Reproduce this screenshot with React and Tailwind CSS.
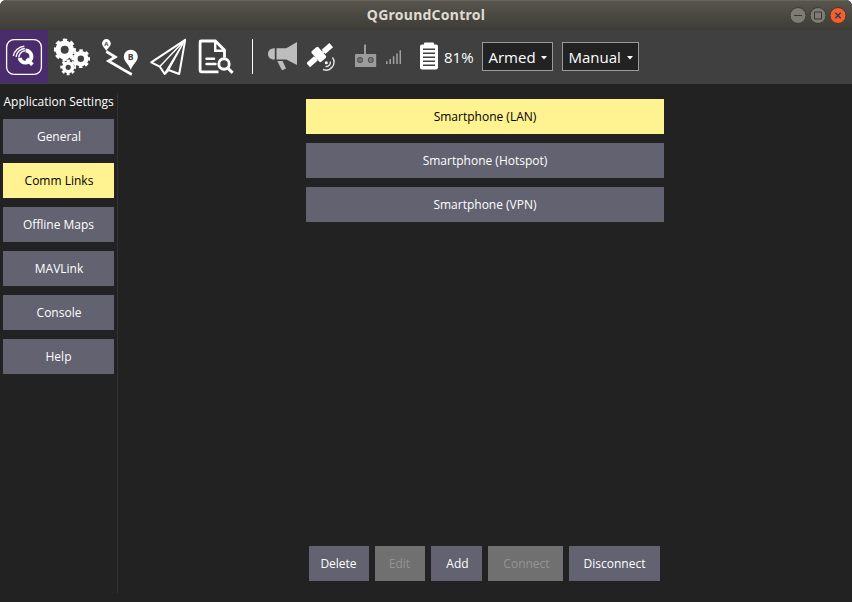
import React from 'react';

function Gear({ x, y, r, w, teeth }) {
  const outer = r - 1.3;
  const unit = (2 * Math.PI * outer) / (teeth * 2);
  return (
    <g fill="none" stroke="#fff">
      <circle cx={x} cy={y} r={r - 1.8 - w / 2} strokeWidth={w} />
      <circle cx={x} cy={y} r={outer} strokeWidth="2.6" strokeDasharray={`${unit * 1.1} ${unit * 0.9}`} strokeDashoffset={unit * 0.55} />
    </g>
  );
}

function Logo() {
  return (
    <svg className="block h-[53px] w-12 shrink-0 self-start bg-[#4a2c6d]" viewBox="0 30 48 53" fill="none">
      <rect x="6.6" y="39.6" width="34.8" height="34.8" rx="7.5" stroke="#fff" strokeWidth="1.3" />
      <path d="M25.5 50.6a6 6 0 1 1-5.9 7.4" stroke="#fff" strokeWidth="4" />
      <path d="M26.8 58.8l5.6 6" stroke="#fff" strokeWidth="3.6" />
      <path d="M18.8 57.5a6.8 6.8 0 0 1 6.2-6.7M16 56.8a9.5 9.5 0 0 1 8.8-8.3M13.3 56a12 12 0 0 1 11-9.8" stroke="#fff" strokeWidth="1.4" />
    </svg>
  );
}

function Gears() {
  return (
    <svg className="mt-px ml-1.5 h-[38px] w-9 shrink-0" viewBox="54 38 36 38">
      <Gear x={64.7} y={49.8} r={11.2} w={5.4} teeth={8} />
      <Gear x={80.8} y={58.7} r={9.4} w={4.4} teeth={8} />
      <Gear x={68.2} y={67.3} r={7.9} w={3.5} teeth={8} />
    </svg>
  );
}

function Plan() {
  return (
    <svg className="mt-px ml-3 h-[38px] w-9 shrink-0" viewBox="102 38 36 38">
      <path d="M106.3 51.5L115.3 57l-6.8 4 16 9.3 7.3 4.2" fill="none" stroke="#fff" strokeWidth="2.7" />
      <path d="M106.3 51c-1.3-2.6-4.3-4.8-4.3-7.5a4.4 4.4 0 0 1 8.8 0c0 2.7-3.2 4.9-4.5 7.5z" fill="#fff" />
      <path d="M130.8 70c-1.4-5-7-8.7-7-13.3a7 7 0 0 1 14 0c0 4.6-5.6 8.3-7 13.3z" fill="#fff" />
      <text x="106.3" y="46" textAnchor="middle" fontSize="6" fontWeight="700" fontFamily="Open Sans, sans-serif" fill="#404040">A</text>
      <text x="130.7" y="59.5" textAnchor="middle" fontSize="8.5" fontWeight="700" fontFamily="Open Sans, sans-serif" fill="#404040">B</text>
    </svg>
  );
}

function Fly() {
  return (
    <svg className="mt-px ml-3 h-[38px] w-9 shrink-0" viewBox="150 38 36 38" fill="none" stroke="#fff" strokeLinejoin="round">
      <path d="M185.2 39.8L151.2 62.3l8.6 4.3 4.9 7.4 3.8-4 10.7 4z" strokeWidth="2" />
      <path d="M185 40l-25.2 26.600M185 40l-20.3 33.500M185 40l-16.500 30" strokeWidth="1.4" />
    </svg>
  );
}

function Analyze() {
  return (
    <svg className="mt-px ml-3 h-[38px] w-9 shrink-0" viewBox="198 38 36 38" fill="none" stroke="#fff">
      <path d="M218.5 71.8h-17.400a1 1 0 0 1-1-1V42a1 1 0 0 1 1-1h14.200l9.200 9.200v7.200" strokeWidth="2.800" />
      <path d="M215.200 41.200v9.600h8.800" strokeWidth="2.400" />
      <path d="M206.500 58.800h7.500M206.500 64h9" strokeWidth="2.500" strokeLinecap="round" />
      <circle cx="224" cy="64" r="5.200" strokeWidth="2.900" />
      <path d="M227.800 68l4.800 4.900" strokeWidth="3" />
    </svg>
  );
}

function Megaphone() {
  return (
    <svg className="mt-px ml-[15px] h-[38px] w-[30px] shrink-0" viewBox="268 38 30 38" fill="#bdbdbd">
      <path d="M274.8 48.200v11.300c-4 0-6.800-2-6.800-5.600s2.800-5.700 6.800-5.700zM276.500 48.200h9.800L297 42v23l-10.700-5.500h-9.800z" />
      <path d="M277.300 61h5.300l3.400 7.500-4 1.800z" />
    </svg>
  );
}

function Satellite() {
  return (
    <svg className="mt-px ml-[9px] h-[38px] w-[30px] shrink-0" viewBox="307 38 30 38">
      <g fill="#fff" transform="translate(319.500 55.300) rotate(-41)">
        <rect x="-15" y="-2.800" width="10.200" height="5.600" />
        <rect x="5.300" y="-2.800" width="10.200" height="5.600" />
        <rect x="-8" y="-1" width="16" height="2" />
        <rect x="-4.400" y="-8.200" width="8.800" height="14.200" rx="1.500" />
      </g>
      <path d="M330.300 61.500a4.200 4.200 0 0 1-4.800 5M332.500 57.500a8 8 0 0 1-9.500 12" fill="none" stroke="#e2e2e2" strokeWidth="1.400" />
      <circle cx="326.300" cy="62.700" r="1.500" fill="#fff" />
    </svg>
  );
}

function Radio() {
  return (
    <svg className="mt-px ml-[18px] h-[38px] w-[22px] shrink-0" viewBox="355 38 22 38">
      <path d="M364 44.500h2V54h9.200a1 1 0 0 1 1 1v12H355V55a1 1 0 0 1 1-1h8z" fill="#9b9b9b" />
      <g fill="none" stroke="#505050" strokeWidth="1.300">
        <circle cx="360" cy="60" r="2.300" />
        <circle cx="370.800" cy="60" r="2.300" />
      </g>
      <path d="M360 57.500v5M370 60h2" stroke="#505050" />
    </svg>
  );
}

function Signal() {
  return (
    <svg className="mt-px ml-[9px] h-[38px] w-[15px] shrink-0" viewBox="386 38 15 38" stroke="#a2a2a2" strokeWidth="1.500">
      <path d="M386.800 64v-2.800M390.200 64v-5M393.600 64v-7.800M397 64V53.500M400.300 64V50.200" />
    </svg>
  );
}

function Battery() {
  return (
    <svg className="mt-px ml-[19px] h-[38px] w-[18px] shrink-0" viewBox="420 38 18 38">
      <path d="M424 44.500v-1a1 1 0 0 1 1-1h8a1 1 0 0 1 1 1v1h2a2 2 0 0 1 2 2v21a2 2 0 0 1-2 2h-14a2 2 0 0 1-2-2v-21a2 2 0 0 1 2-2z" fill="#fff" />
      <path d="M423 49.300h12M423 53.300h12M423 57.300h12M423 61.300h12M423 65.300h12" stroke="#404040" strokeWidth="1.600" />
    </svg>
  );
}

function Select({ className, children }) {
  return (
    <button className={`flex h-[29px] shrink-0 items-center justify-between border border-[#9a9a9a] bg-[#222] pr-[5px] pl-[5.5px] text-[15px] ${className}`}>
      <span className="pt-px">{children}</span>
      <svg className="mt-[3px] h-1 w-1.5" viewBox="0 0 6 4" fill="#fff"><path d="M0 0h6L3 3.500z" /></svg>
    </button>
  );
}

function Button({ className = '', active, disabled, children }) {
  const tone = active
    ? 'bg-[#fff291] text-black'
    : disabled
      ? 'bg-[#707070] text-[#949494]'
      : 'bg-[#626270] text-white';
  return (
    <button className={`h-[35px] shrink-0 text-center leading-[35px] ${tone} ${className}`} disabled={disabled}>
      {children}
    </button>
  );
}

const sections = ['General', 'Comm Links', 'Offline Maps', 'MAVLink', 'Console', 'Help'];
const links = ['Smartphone (LAN)', 'Smartphone (Hotspot)', 'Smartphone (VPN)'];

export default function App() {
  return (
    <div className="bg-white">
      <div className="flex h-[602px] w-[852px] flex-col overflow-hidden rounded-t-[6px] bg-[#222] font-['Open_Sans',sans-serif] text-[12px] text-white">
        <header className="grid h-[30px] shrink-0 grid-cols-[1fr_auto_1fr] items-center border-t border-[#66645c] bg-linear-to-b from-[#57554d] to-[#3d3c37]">
          <h1 className="col-start-2 pb-0.5 font-['Noto_Sans',sans-serif] text-[14px] font-bold tracking-[0.25px] text-[#dfdbd2]">QGroundControl</h1>
          <svg className="mr-[5px] h-5 w-[58px] justify-self-end" viewBox="0 0 58 20" fill="none" stroke="#3a3934">
            <circle cx="9" cy="9.500" r="8" fill="#7d7b73" />
            <circle cx="29" cy="9.500" r="8" fill="#7d7b73" />
            <circle cx="49" cy="9.500" r="8" fill="#ee6135" stroke="#5b2f20" />
            <path d="M5 9.500h8M25.500 6h7v7h-7z" />
            <path d="M46.300 6.800l5.400 5.400M51.700 6.800l-5.400 5.400" strokeWidth="1.400" />
          </svg>
        </header>
        <nav className="flex h-[54px] shrink-0 items-center bg-[#404040] pb-px">
          <Logo />
          <Gears />
          <Plan />
          <Fly />
          <Analyze />
          <div className="ml-[18px] h-[35px] w-px shrink-0 bg-white" />
          <Megaphone />
          <Satellite />
          <Radio />
          <Signal />
          <Battery />
          <span className="ml-1.5 w-[38px] shrink-0 pt-px text-[15px]">81%</span>
          <Select className="w-[71px]">Armed</Select>
          <Select className="ml-[9px] w-[77px]">Manual</Select>
        </nav>
        <main className="flex min-h-0 flex-1">
          <aside className="flex w-[114px] shrink-0 flex-col gap-[9px] pl-[3px] pt-[9px]">
            <h2 className="h-[17px] whitespace-nowrap pl-[0.5px] leading-[17px]">Application Settings</h2>
            {sections.map((name) => (
              <Button key={name} className={name === 'Offline Maps' || name === 'Help' ? '' : 'pl-px'} active={name === 'Comm Links'}>{name}</Button>
            ))}
          </aside>
          <div className="mt-[9px] mb-[9px] ml-[3px] w-px shrink-0 bg-[#333]" />
          <section className="flex flex-1 flex-col items-center justify-between pt-[15px] pb-[21px]">
            <div className="flex w-[358px] flex-col gap-[9px]">
              {links.map((name, i) => (
                <Button key={name} active={i === 0}>{name}</Button>
              ))}
            </div>
            <div className="flex gap-1.5 pr-px">
              <Button className="w-[60px] pr-px">Delete</Button>
              <Button className="w-[50px] pr-px" disabled>Edit</Button>
              <Button className="w-[51px] pl-0.5">Add</Button>
              <Button className="w-[75px] pl-0.5" disabled>Connect</Button>
              <Button className="w-[91px]">Disconnect</Button>
            </div>
          </section>
        </main>
      </div>
    </div>
  );
}
